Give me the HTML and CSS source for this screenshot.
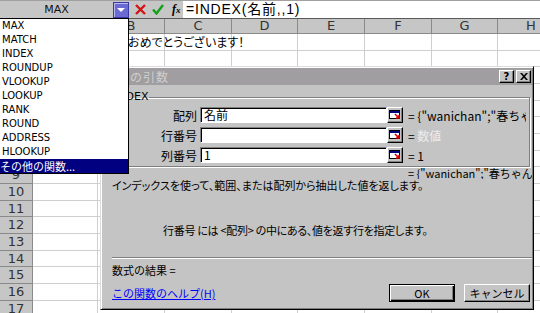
FILE: index.html
```html
<!DOCTYPE html>
<html lang="ja">
<head>
<meta charset="utf-8">
<link rel="stylesheet" href="styles.css">
</head>
<body>
<div class="fbar">
  <div class="namebox">MAX</div>
  <div class="ddbtn"><svg width="8" height="5" viewBox="0 0 8 5"><path d="M0 0h8L4 4z" fill="#fff"/></svg></div>
  <div class="fbtns">
    <svg class="ic-x" width="11" height="11" viewBox="0 0 11 11"><path d="M1 1L10 10M10 1L1 10" stroke="#d21414" stroke-width="2.4"/></svg>
    <svg class="ic-ok" width="12" height="11" viewBox="0 0 12 11"><path d="M1 5.5L4.5 9.5L11 1" stroke="#16a016" stroke-width="2.4" fill="none"/></svg>
    <span class="fx"><i>f</i><small>x</small></span>
  </div>
  <div class="finput">=INDEX(名前,,1)</div>
</div>

<div class="sheet">
  <div class="corner"></div>
  <div class="ch">A</div><div class="ch">B</div><div class="ch">C</div><div class="ch">D</div><div class="ch">E</div><div class="ch">F</div><div class="ch">G</div><div class="ch">H</div>

  <div class="rh">1</div><div class="c"></div><div class="c txt">皆様、おめでとうございます！</div><div class="c"></div><div class="c"></div><div class="c"></div><div class="c"></div><div class="c"></div><div class="c"></div>
  <div class="rh">2</div><div class="c"></div><div class="c"></div><div class="c"></div><div class="c"></div><div class="c"></div><div class="c"></div><div class="c"></div><div class="c"></div>
  <div class="rh">3</div><div class="c"></div><div class="c"></div><div class="c"></div><div class="c"></div><div class="c"></div><div class="c"></div><div class="c"></div><div class="c"></div>
  <div class="rh">4</div><div class="c"></div><div class="c"></div><div class="c"></div><div class="c"></div><div class="c"></div><div class="c"></div><div class="c"></div><div class="c"></div>
  <div class="rh">5</div><div class="c"></div><div class="c"></div><div class="c"></div><div class="c"></div><div class="c"></div><div class="c"></div><div class="c"></div><div class="c"></div>
  <div class="rh">6</div><div class="c"></div><div class="c"></div><div class="c"></div><div class="c"></div><div class="c"></div><div class="c"></div><div class="c"></div><div class="c"></div>
  <div class="rh">7</div><div class="c"></div><div class="c"></div><div class="c"></div><div class="c"></div><div class="c"></div><div class="c"></div><div class="c"></div><div class="c"></div>
  <div class="rh">8</div><div class="c"></div><div class="c"></div><div class="c"></div><div class="c"></div><div class="c"></div><div class="c"></div><div class="c"></div><div class="c"></div>
  <div class="rh">9</div><div class="c"></div><div class="c"></div><div class="c"></div><div class="c"></div><div class="c"></div><div class="c"></div><div class="c"></div><div class="c"></div>
  <div class="rh">10</div><div class="c"></div><div class="c"></div><div class="c"></div><div class="c"></div><div class="c"></div><div class="c"></div><div class="c"></div><div class="c"></div>
  <div class="rh">11</div><div class="c"></div><div class="c"></div><div class="c"></div><div class="c"></div><div class="c"></div><div class="c"></div><div class="c"></div><div class="c"></div>
  <div class="rh">12</div><div class="c"></div><div class="c"></div><div class="c"></div><div class="c"></div><div class="c"></div><div class="c"></div><div class="c"></div><div class="c"></div>
  <div class="rh">13</div><div class="c"></div><div class="c"></div><div class="c"></div><div class="c"></div><div class="c"></div><div class="c"></div><div class="c"></div><div class="c"></div>
  <div class="rh">14</div><div class="c"></div><div class="c"></div><div class="c"></div><div class="c"></div><div class="c"></div><div class="c"></div><div class="c"></div><div class="c"></div>
  <div class="rh">15</div><div class="c"></div><div class="c"></div><div class="c"></div><div class="c"></div><div class="c"></div><div class="c"></div><div class="c"></div><div class="c"></div>
  <div class="rh">16</div><div class="c"></div><div class="c"></div><div class="c"></div><div class="c"></div><div class="c"></div><div class="c"></div><div class="c"></div><div class="c"></div>
  <div class="rh">17</div><div class="c"></div><div class="c"></div><div class="c"></div><div class="c"></div><div class="c"></div><div class="c"></div><div class="c"></div><div class="c"></div>
</div>

<ul class="dropdown">
  <li>MAX</li>
  <li>MATCH</li>
  <li>INDEX</li>
  <li>ROUNDUP</li>
  <li>VLOOKUP</li>
  <li>LOOKUP</li>
  <li>RANK</li>
  <li>ROUND</li>
  <li>ADDRESS</li>
  <li>HLOOKUP</li>
  <li class="sel">その他の関数...</li>
</ul>

<div class="dialog">
  <div class="titlebar">
    <span class="title">関数の引数</span>
    <span class="tbtns">
      <span class="tbtn q">?</span>
      <span class="tbtn"><svg width="8" height="7" viewBox="0 0 8 7"><path d="M0 0h2l2 2.3L6 0h2L5 3.5L8 7H6L4 4.7L2 7H0l3-3.5z" fill="#000"/></svg></span>
    </span>
  </div>

  <fieldset class="group">
    <legend>INDEX</legend>
    <div class="arg">
      <label>配列</label>
      <div class="field"><span class="input">名前</span><span class="ref"><svg width="12" height="10" viewBox="0 0 12 10"><rect x="0.5" y="0.5" width="10" height="8" fill="#fff" stroke="#000"/><rect x="1" y="1" width="9" height="2" fill="#000080"/><path d="M6 4L10 8M10 5v3H7" stroke="#e00000" stroke-width="1.6" fill="none"/></svg></span></div>
      <span class="val">= {"wanichan";"春ちゃん";"</span>
    </div>
    <div class="arg">
      <label>行番号</label>
      <div class="field"><span class="input"></span><span class="ref"><svg width="12" height="10" viewBox="0 0 12 10"><rect x="0.5" y="0.5" width="10" height="8" fill="#fff" stroke="#000"/><rect x="1" y="1" width="9" height="2" fill="#000080"/><path d="M6 4L10 8M10 5v3H7" stroke="#e00000" stroke-width="1.6" fill="none"/></svg></span></div>
      <span class="val">= <span class="hint">数値</span></span>
    </div>
    <div class="arg">
      <label>列番号</label>
      <div class="field"><span class="input">1</span><span class="ref"><svg width="12" height="10" viewBox="0 0 12 10"><rect x="0.5" y="0.5" width="10" height="8" fill="#fff" stroke="#000"/><rect x="1" y="1" width="9" height="2" fill="#000080"/><path d="M6 4L10 8M10 5v3H7" stroke="#e00000" stroke-width="1.6" fill="none"/></svg></span></div>
      <span class="val">= 1</span>
    </div>
  </fieldset>

  <div class="result">= {"wanichan";"春ちゃん";"</div>
  <p class="desc">インデックスを使って、範囲、または配列から抽出した値を返します。</p>
  <p class="argdesc">行番号 には &lt;配列&gt; の中にある、値を返す行を指定します。</p>
  <div class="sep"></div>
  <p class="formula">数式の結果 =</p>
  <div class="footer">
    <a class="help" href="#">この関数のヘルプ(H)</a>
    <div class="btns">
      <button class="btn default">OK</button>
      <button class="btn">キャンセル</button>
    </div>
  </div>
</div>
</body>
</html>
```
FILE: styles.css
```css
* { box-sizing: border-box; margin: 0; padding: 0; }

body {
  width: 540px;
  height: 313px;
  overflow: hidden;
  position: relative;
  background: #fff;
  font-family: "DejaVu Sans", sans-serif;
  color: #000;
}

/* formula bar */
.fbar {
  display: flex;
  align-items: center;
  height: 19px;
  background: #c6c6c6;
  border-top: 1px solid #a0a0a0;
  border-bottom: 1px solid #5a5a5a;
}
.namebox {
  width: 113px;
  text-align: center;
  font-size: 11px;
  color: #111;
}
.ddbtn {
  width: 16px;
  height: 16px;
  background: #6a6ad2;
  border: 1px solid #3a3aa0;
  box-shadow: inset 1px 1px 0 #b8b8f0;
  display: flex;
  align-items: flex-end;
  justify-content: center;
  padding-bottom: 4px;
}
.fbtns {
  display: flex;
  align-items: center;
  width: 54px;
  padding-left: 6px;
  gap: 6px;
}
.fx {
  font-family: "Liberation Serif", serif;
  font-size: 12px;
  font-weight: bold;
  margin-left: 2px;
}
.fx small { font-size: 9px; font-style: italic; }
.finput {
  flex: 1;
  height: 17px;
  background: #fff;
  font-family: "Liberation Sans", "Noto Sans CJK JP", sans-serif;
  font-size: 14px;
  line-height: 17px;
  padding-left: 3px;
  letter-spacing: 0.8px;
}

/* sheet */
.sheet {
  display: grid;
  grid-template-columns: 33px 65px 67px 67px 66px 67px 67px 66px 67px;
  grid-template-rows: 15px;
  grid-auto-rows: 16.667px;
}
.corner, .ch, .rh {
  background: #c6c6c6;
  border-right: 1px solid #8a8a8a;
  border-bottom: 1px solid #8a8a8a;
  font-size: 13px;
  color: #333;
  text-align: center;
}
.ch { line-height: 14px; }
.rh { line-height: 16px; }
.c {
  border-right: 1px solid #cfcfcf;
  border-bottom: 1px solid #cfcfcf;
}
.txt {
  white-space: nowrap;
  overflow: visible;
  font-family: "Noto Sans CJK JP", sans-serif;
  font-size: 12px;
  line-height: 16px;
  padding-left: 0;
  position: relative;
  z-index: 1;
  font-feature-settings: "palt";
}

/* dropdown */
.dropdown {
  position: absolute;
  left: 0;
  top: 18px;
  width: 129px;
  list-style: none;
  background: #fff;
  border: 1px solid #000;
  border-left: none;
  z-index: 5;
}
.dropdown li {
  height: 14px;
  line-height: 14px;
  font-size: 10px;
  padding-left: 2px;
  color: #000;
}
.dropdown li.sel {
  background: #000080;
  color: #fff;
  font-family: "Noto Sans CJK JP", sans-serif;
  font-size: 11px;
  padding-left: 0;
}

/* dialog */
.dialog {
  position: absolute;
  left: 100px;
  top: 66px;
  width: 434px;
  height: 244px;
  background: #c4c4c4;
  border: 1px solid;
  border-color: #dcdcdc #000 #000 #dcdcdc;
  box-shadow: inset 1px 1px 0 #fff, inset -1px -1px 0 #808080;
  padding: 1px;
  font-family: "Noto Sans CJK JP", sans-serif;
  font-size: 11px;
  z-index: 2;
}
.titlebar {
  height: 17px;
  background: #a09ea0;
  display: flex;
  align-items: center;
  justify-content: space-between;
  padding: 0 1px 0 2px;
}
.title {
  color: #cfcfcf;
  font-size: 12px;
  letter-spacing: 1px;
}
.tbtns { display: flex; gap: 2px; }
.tbtn {
  width: 15px;
  height: 13px;
  background: #c4c4c4;
  border: 1px solid;
  border-color: #fff #000 #000 #fff;
  box-shadow: inset -1px -1px 0 #808080;
  display: flex;
  align-items: center;
  justify-content: center;
}
.tbtn.q {
  font-family: "DejaVu Sans", sans-serif;
  font-size: 10px;
  font-weight: bold;
  line-height: 11px;
}

.group {
  margin: 6px 2px 0 4px;
  border: 1px solid #808080;
  box-shadow: 1px 1px 0 #fff, inset 1px 1px 0 #fff;
  padding: 4px 0 3px 0;
  display: flex;
  flex-direction: column;
  gap: 4px;
}
.group legend {
  font-family: "DejaVu Sans", sans-serif;
  font-size: 11px;
  line-height: 12px;
  padding: 0 1px;
  margin-left: 6px;
}
.arg {
  display: flex;
  align-items: center;
  height: 16px;
}
.arg label {
  width: 90px;
  text-align: right;
  font-size: 12px;
  margin-right: 3px;
}
.field {
  display: flex;
  width: 203px;
  height: 16px;
}
.input {
  flex: 1;
  background: #fff;
  border: 1px solid;
  border-color: #808080 #fff #fff #808080;
  box-shadow: inset 1px 1px 0 #000;
  font-size: 12px;
  line-height: 13px;
  padding-left: 3px;
}
.ref {
  width: 16px;
  height: 16px;
  background: #c4c4c4;
  border: 1px solid;
  border-color: #fff #000 #000 #fff;
  box-shadow: inset -1px -1px 0 #808080;
  display: flex;
  align-items: center;
  justify-content: center;
}
.val {
  margin-left: 5px;
  font-size: 12px;
  white-space: nowrap;
  overflow: hidden;
  width: 118px;
}
.hint { color: #ececec; }

.result {
  margin-left: 306px;
  font-size: 11px;
  line-height: 12px;
  white-space: nowrap;
  overflow: hidden;
  margin-top: 0;
}
.desc {
  margin-left: 10px;
  line-height: 13px;
  font-feature-settings: "palt";
}
.argdesc {
  margin: 32px 0 0 61px;
  line-height: 13px;
  font-feature-settings: "palt";
  letter-spacing: -0.3px;
}
.sep {
  margin: 20px 0 0 10px;
  height: 2px;
  border-top: 1px solid #808080;
  border-bottom: 1px solid #fff;
}
.formula {
  margin: 5px 0 0 10px;
  line-height: 12px;
}
.footer {
  display: flex;
  align-items: center;
  justify-content: space-between;
  margin: 8px 2px 0 10px;
}
.help {
  color: #0000ff;
  text-decoration: underline;
  font-size: 11px;
}
.btns { display: flex; gap: 9px; }
.btn {
  width: 66px;
  height: 18px;
  background: #c4c4c4;
  border: 1px solid;
  border-color: #fff #000 #000 #fff;
  box-shadow: inset -1px -1px 0 #808080;
  font-family: "Noto Sans CJK JP", sans-serif;
  font-size: 11px;
  color: #000;
}
.btn.default {
  border: 1px solid #000;
  box-shadow: inset 1px 1px 0 #fff, inset -1px -1px 0 #000, inset -2px -2px 0 #808080;
}
```
